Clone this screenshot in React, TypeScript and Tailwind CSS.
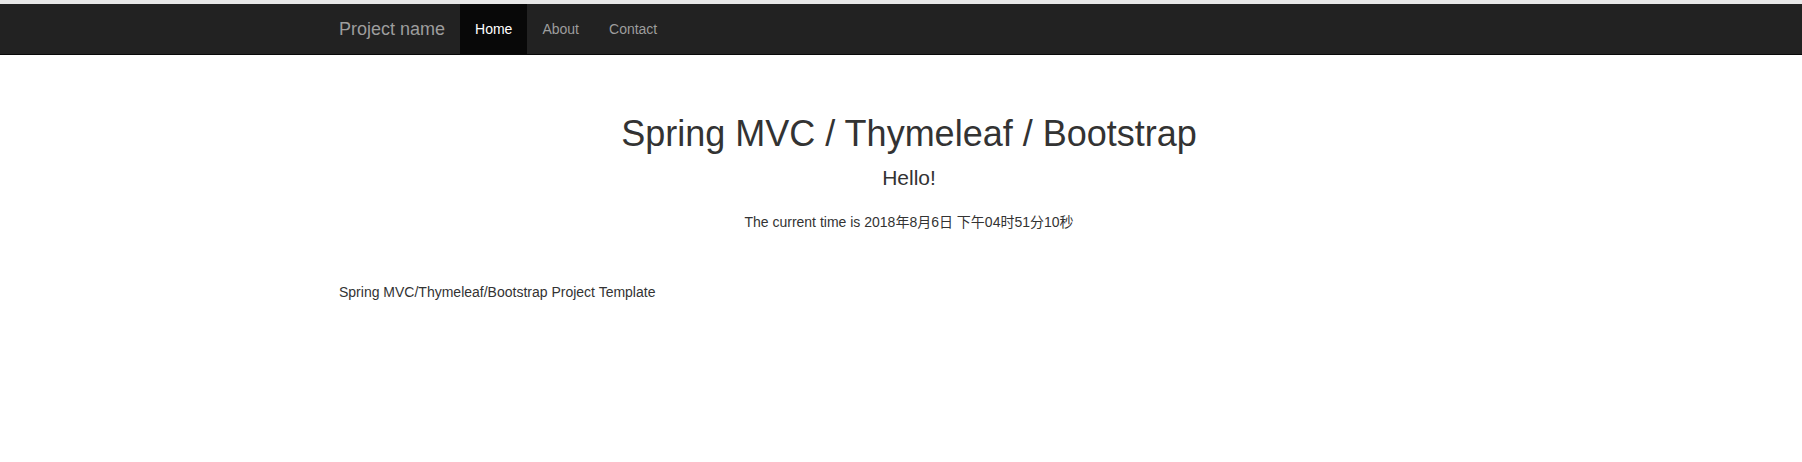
const font = "font-['Liberation_Sans','Noto_Sans_CJK_SC',Arial,sans-serif]";

const links = [
  { label: "Home", active: true },
  { label: "About", active: false },
  { label: "Contact", active: false },
];

function Navbar() {
  return (
    <nav className="h-[51px] bg-[#222222] border-b border-[#080808]">
      <div className="ml-[324px] w-[1170px] flex h-[50px]">
        <a className="px-[15px] py-[15px] text-[18px] leading-[20px] text-[#9d9d9d]">
          Project name
        </a>
        <ul className="flex">
          {links.map((l) => (
            <li key={l.label}>
              <a
                className={
                  l.active
                    ? "block px-[15px] py-[15px] text-[14px] leading-[20px] text-white bg-[#080808] h-[50px]"
                    : "block px-[15px] py-[15px] text-[14px] leading-[20px] text-[#9d9d9d]"
                }
              >
                {l.label}
              </a>
            </li>
          ))}
        </ul>
      </div>
    </nav>
  );
}

export default function App() {
  return (
    <div className={`${font} min-h-[462px] bg-white text-[#333333]`}>
      <div className="h-[4px] bg-[#e8e8e8]" />
      <Navbar />
      <div className="ml-[324px] w-[1170px] px-[15px]">
        <div className="text-center pt-[59px]">
          <h1 className="text-[36px] leading-[39.6px]">Spring MVC / Thymeleaf / Bootstrap</h1>
          <h3 className="mt-[12px] text-[21px] leading-[23px]">Hello!</h3>
          <p className="mt-[23px] text-[14px] leading-[20px]">
            The current time is 2018年8月6日 下午04时51分10秒
          </p>
        </div>
        <p className="mt-[50px] text-[14px] leading-[20px]">
          Spring MVC/Thymeleaf/Bootstrap Project Template
        </p>
      </div>
    </div>
  );
}
